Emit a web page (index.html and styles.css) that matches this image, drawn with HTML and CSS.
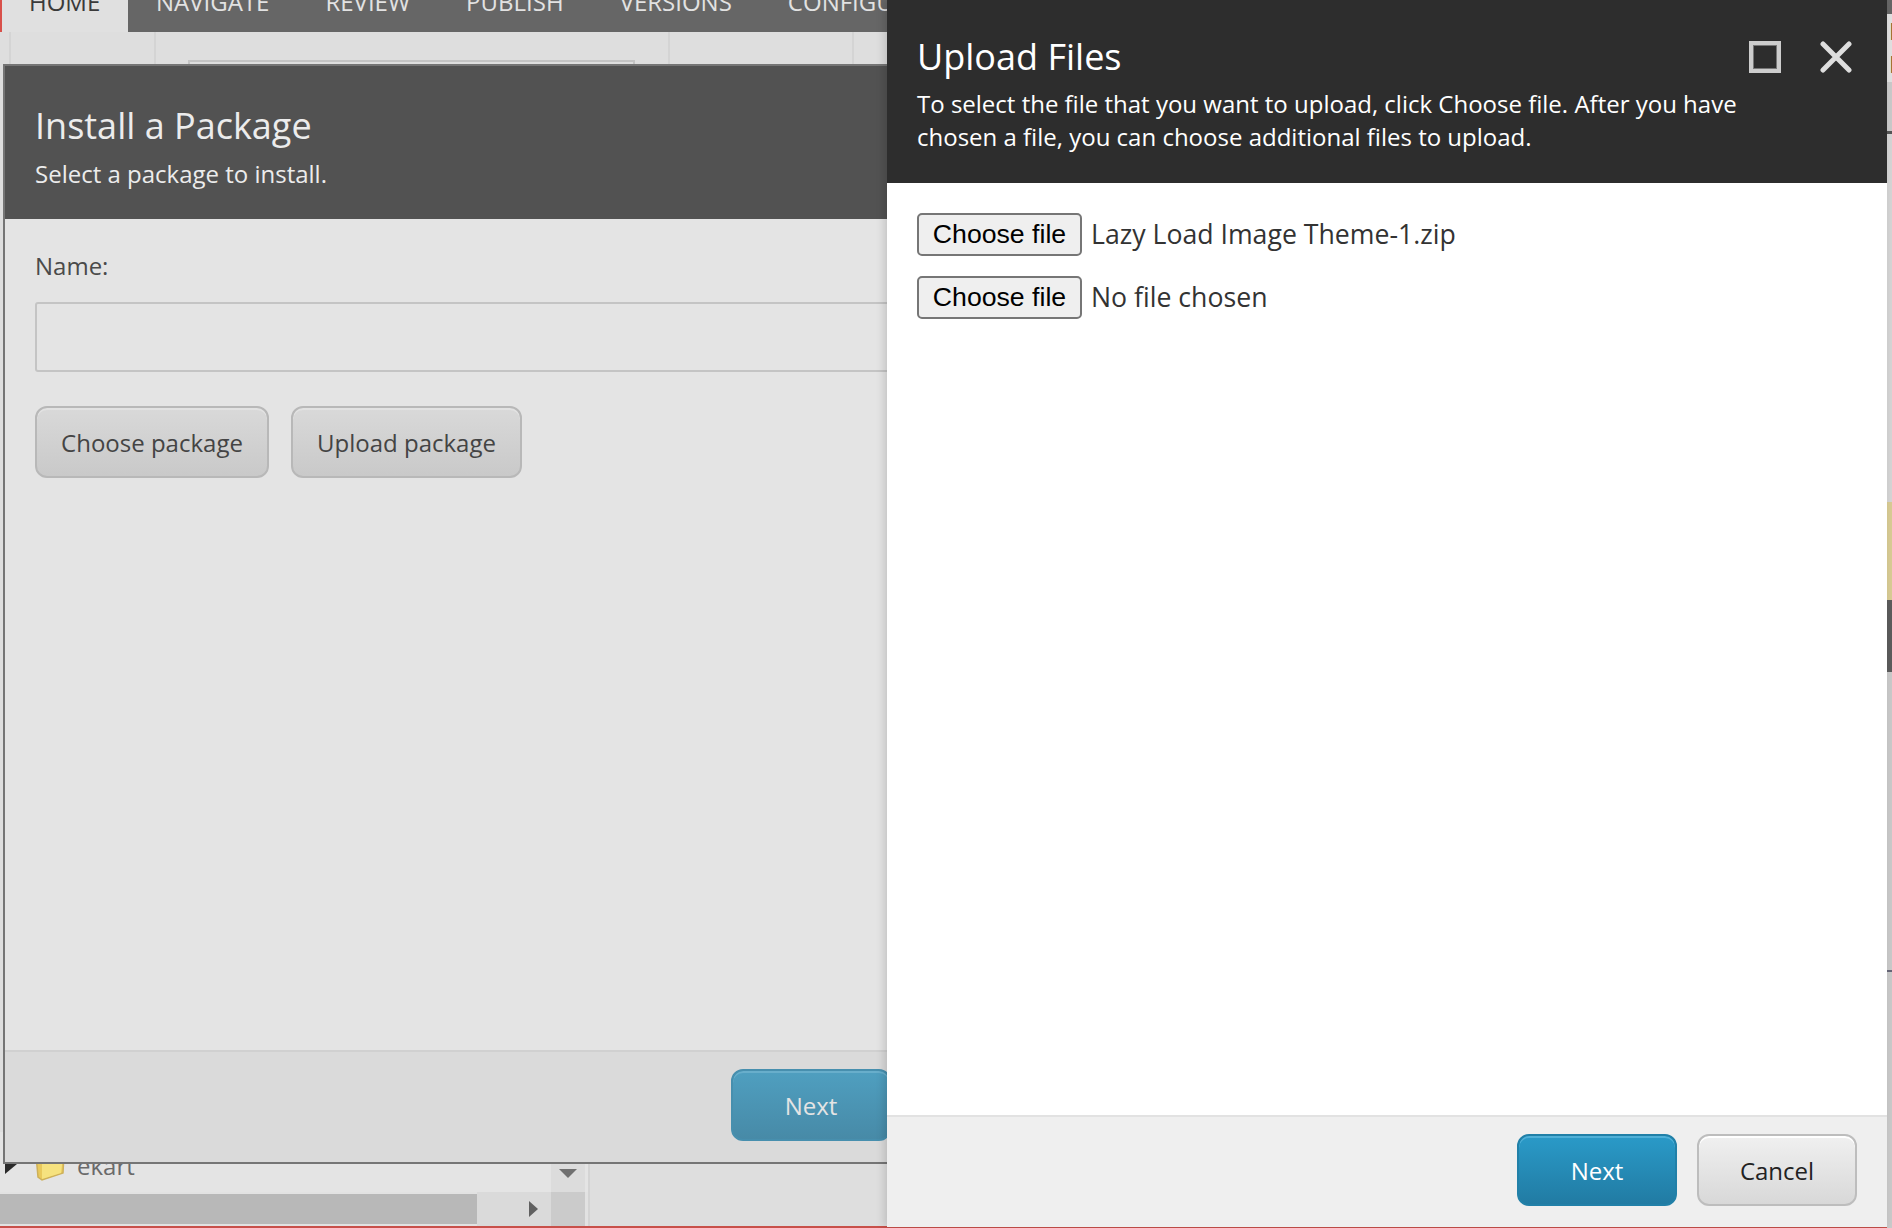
FILE: index.html
```html
<!DOCTYPE html>
<html lang="en">
<head>
<meta charset="utf-8">
<title>Upload Files</title>
<link rel="stylesheet" href="styles.css">
</head>
<body>
<div class="stage">
  <div class="app">
    <nav class="tabs">
      <span class="tab tab-active">HOME</span>
      <span class="tab">NAVIGATE</span>
      <span class="tab">REVIEW</span>
      <span class="tab">PUBLISH</span>
      <span class="tab">VERSIONS</span>
      <span class="tab">CONFIGURE</span>
    </nav>
    <div class="ribbon">
      <span class="ribbon-cell rc1"></span>
      <span class="ribbon-cell rc2"></span>
      <span class="ribbon-cell rc3"><span class="ribbon-box"></span></span>
      <span class="ribbon-cell rc4"></span>
    </div>
    <div class="main">
      <aside class="tree">
        <div class="tree-body">
          <div class="tree-row">
            <span class="tree-arrow"></span>
            <svg class="folder" viewBox="0 0 30 30" width="30" height="30"><path d="M1 4 L14 2 L29 3 L28 22 L7 29 L3 26 Z" fill="#e9c95c" stroke="#cdb05a" stroke-width="1.5"/><path d="M7 10 L28 6 L26 22 L7 28 Z" fill="#f6e27f"/></svg>
            <span class="tree-label">ekart</span>
          </div>
          <div class="vscroll"><span class="arrow-down"></span></div>
        </div>
        <div class="hscroll">
          <span class="hthumb"></span>
          <span class="htrack"><span class="arrow-right"></span></span>
          <span class="hcorner"></span>
        </div>
      </aside>
      <div class="content"></div>
    </div>
    <div class="redline"></div>
  </div>

  <section class="dialog-back">
    <header class="back-head">
      <h2 class="back-title">Install a Package</h2>
      <p class="back-sub">Select a package to install.</p>
    </header>
    <div class="back-body">
      <label class="back-label">Name:</label>
      <div class="back-input"></div>
      <div class="back-actions">
        <span class="btn btn-back btn-choose">Choose package</span>
        <span class="btn btn-back btn-upload">Upload package</span>
      </div>
    </div>
    <footer class="back-foot">
      <span class="btn btn-back-next">Next</span>
    </footer>
  </section>

  <div class="edge">
    <span class="edge-a"></span>
    <span class="edge-b"><i>F</i><i>L</i></span>
    <span class="edge-c"></span>
    <span class="edge-tick"></span>
    <span class="edge-d"></span>
    <span class="edge-yellow"></span>
    <span class="edge-dark"></span>
    <span class="edge-e"></span>
    <span class="edge-tick2"></span>
    <span class="edge-f"></span>
  </div>

  <section class="dialog-front">
    <header class="front-head">
      <div class="front-titlebar">
        <h1 class="front-title">Upload Files</h1>
        <div class="front-icons">
          <svg class="icon" viewBox="0 0 32 32" width="32" height="32"><rect x="4.5" y="4.5" width="23" height="23" fill="none" stroke="#777" stroke-width="1"/><rect x="2" y="2" width="28" height="28" fill="none" stroke="#cdcdcd" stroke-width="4"/></svg>
          <svg class="icon" viewBox="0 0 32 32" width="32" height="32"><path d="M3 3 L29 29 M29 3 L3 29" fill="none" stroke="#dedede" stroke-width="5" stroke-linecap="round"/></svg>
        </div>
      </div>
      <p class="front-desc">To select the file that you want to upload, click Choose file. After you have chosen a file, you can choose additional files to upload.</p>
    </header>
    <div class="front-body">
      <div class="file-row"><button class="file-btn" type="button">Choose file</button><span class="file-name">Lazy Load Image Theme-1.zip</span></div>
      <div class="file-row"><button class="file-btn" type="button">Choose file</button><span class="file-name">No file chosen</span></div>
    </div>
    <footer class="front-foot">
      <span class="btn btn-primary">Next</span>
      <span class="btn btn-cancel">Cancel</span>
    </footer>
  </section>
</div>
</body>
</html>
```
FILE: styles.css
```css
* { box-sizing: border-box; }
html, body { margin: 0; padding: 0; }
body { font-family: "Open Sans", "Noto Sans", sans-serif; background: #dcdcdc; overflow: hidden; }
h1, h2, p { margin: 0; font-weight: 400; }

.stage { position: relative; width: 1892px; height: 1228px; overflow: hidden; }

/* background application */
.app { display: flex; flex-direction: column; height: 100%; background: #dedede; }
.tabs { display: flex; align-items: flex-end; height: 32px; background: #666; overflow: hidden; flex: none; }
.tab { font-size: 24px; line-height: 32px; padding: 0 28px 14px; color: #e2e2e2; flex: none; white-space: nowrap; }
.tab-active { background: #e0e0e0; color: #3a3a3a; width: 128px; border-left: 2px solid #d8504a; padding-left: 27px; }
.ribbon { display: flex; height: 32px; flex: none; background: #dedede; }
.ribbon-cell { display: block; height: 100%; border-right: 2px solid #d4d4d4; }
.rc1 { width: 11px; }
.rc2 { width: 145px; }
.rc3 { width: 514px; padding: 28px 0 0 32px; }
.rc4 { width: 184px; }
.ribbon-box { display: block; width: 447px; height: 4px; border: 2px solid #c4c4c4; border-bottom: 0; }
.main { flex: 1; display: flex; min-height: 0; align-items: flex-end; }
.tree { width: 590px; flex: none; border-right: 2px solid #d4d4d4; }
.tree-body { display: flex; height: 60px; background: #e4e4e4; }
.tree-row { flex: 1; display: flex; align-items: center; gap: 12px; padding: 8px 0 0 5px; height: 60px; }
.tree-arrow { width: 0; height: 0; border-top: 10px solid transparent; border-bottom: 10px solid transparent; border-left: 12px solid #2a2a2a; margin: 0 6px 4px 0; }
.folder { flex: none; }
.tree-label { font-size: 24px; color: #6a6a6a; line-height: 30px; }
.vscroll { width: 34px; margin-right: 3px; background: #dcdcdc; display: flex; justify-content: center; padding-top: 37px; }
.arrow-down { width: 0; height: 0; border-left: 9px solid transparent; border-right: 9px solid transparent; border-top: 9px solid #707070; }
.hscroll { display: flex; height: 34px; background: #e2e2e2; padding-right: 3px; }
.hthumb { width: 477px; flex: none; margin: 2px 0; background: #b8b8b8; }
.htrack { width: 74px; flex: none; background: #dadada; display: flex; align-items: center; justify-content: flex-end; padding: 0 13px 0 0; }
.arrow-right { width: 0; height: 0; border-top: 8px solid transparent; border-bottom: 8px solid transparent; border-left: 9px solid #606060; }
.hcorner { width: 34px; flex: none; background: #cbcbcb; }
.content { flex: 1; }
.redline { height: 2px; background: #c8504a; flex: none; }

/* back dialog */
.dialog-back { position: absolute; left: 3px; top: 64px; width: 1100px; height: 1100px; display: flex; flex-direction: column; border: 2px solid #757575; border-right: 0; background: #e4e4e4; }
.back-head { height: 153px; flex: none; background: #525252; padding: 36px 30px 0; color: #ececec; }
.back-title { font-size: 36px; line-height: 48px; }
.back-sub { font-size: 24px; line-height: 33px; margin-top: 7px; }
.back-body { flex: 1; padding: 29px 30px 0; }
.back-label { display: block; font-size: 24px; line-height: 36px; color: #4a4a4a; }
.back-input { height: 70px; margin-top: 18px; border: 2px solid #c4c4c4; border-radius: 3px; background: #e4e4e4; }
.back-actions { display: flex; gap: 22px; margin-top: 34px; }
.back-foot { height: 112px; flex: none; background: #dadada; border-top: 2px solid #d0d0d0; padding: 17px 0 0 726px; }

.btn { display: flex; align-items: center; justify-content: center; height: 72px; font-size: 24px; border-radius: 12px; flex: none; }
.btn-back { background: linear-gradient(#d9d9d9, #c9c9c9); border: 2px solid #b8b8b8; color: #444; box-shadow: inset 0 2px 0 #e2e2e2; }
.btn-choose { width: 234px; }
.btn-upload { width: 231px; }
.btn-back-next { width: 160px; background: linear-gradient(#4f9fc0, #478aa7); color: #e4e4e4; border: 2px solid #478fae; box-shadow: inset 0 2px 0 #68aecb; }

/* right edge strip */
.edge { position: absolute; right: 0; top: 0; bottom: 0; width: 5px; display: flex; flex-direction: column; background: #cfcfcf; }
.edge span { display: block; flex: none; width: 100%; }
.edge-a { height: 14px; background: #666; }
.edge-b { height: 68px; background: #e0e0e0; font-size: 24px; line-height: 33px; color: #4a4a2a; overflow: hidden; }
.edge-b i { display: block; font-style: normal; padding-left: 2px; }
.edge-c { height: 49px; background: #c9c9c9; }
.edge-tick { height: 3px; background: #555; }
.edge-d { height: 368px; background: #d4d4d4; }
.edge-yellow { height: 98px; background: #d8cb94; }
.edge-dark { height: 72px; background: #5c5c5c; }
.edge-e { height: 298px; background: #c9c9c9; }
.edge-tick2 { height: 2px; background: #667; }
.edge-f { flex: 1 !important; background: #c9c9c9; }

/* front dialog */
.dialog-front { position: absolute; left: 887px; top: 0; width: 1000px; height: 1227px; display: flex; flex-direction: column; background: #fff; box-shadow: -3px 0 8px rgba(0,0,0,.14); }
.front-head { height: 183px; flex: none; background: #2d2d2d; color: #fff; padding: 36px 30px 0; }
.front-titlebar { display: flex; justify-content: space-between; align-items: flex-start; }
.front-title { font-size: 36px; line-height: 42px; }
.front-icons { display: flex; gap: 39px; margin: 5px 5px 0 0; }
.icon { display: block; }
.front-desc { font-size: 24px; line-height: 33px; margin-top: 9px; width: 840px; }
.front-body { flex: 1; padding: 30px 30px 0; display: flex; flex-direction: column; gap: 20px; }
.file-row { display: flex; align-items: center; height: 43px; }
.file-btn { width: 165px; height: 43px; padding: 0; font-family: "Liberation Sans", Arial, sans-serif; font-size: 26.67px; color: #000; background: #efefef; border: 2px solid #767676; border-radius: 5px; }
.file-name { margin-left: 9px; padding-bottom: 3px; font-size: 26.67px; color: #333; }
.front-foot { height: 112px; flex: none; background: #efefef; border-top: 2px solid #e2e2e2; display: flex; gap: 20px; justify-content: flex-end; padding: 17px 30px 0 0; }
.btn-primary { width: 160px; background: linear-gradient(#2a9ac8, #217ba3); border: 2px solid #2180a8; color: #fff; box-shadow: inset 0 2px 0 #4fb0d8; }
.btn-cancel { width: 160px; background: linear-gradient(#f0f0f0, #d8d8d8); border: 2px solid #bdbdbd; color: #222; box-shadow: inset 0 2px 0 #fff; }
```
